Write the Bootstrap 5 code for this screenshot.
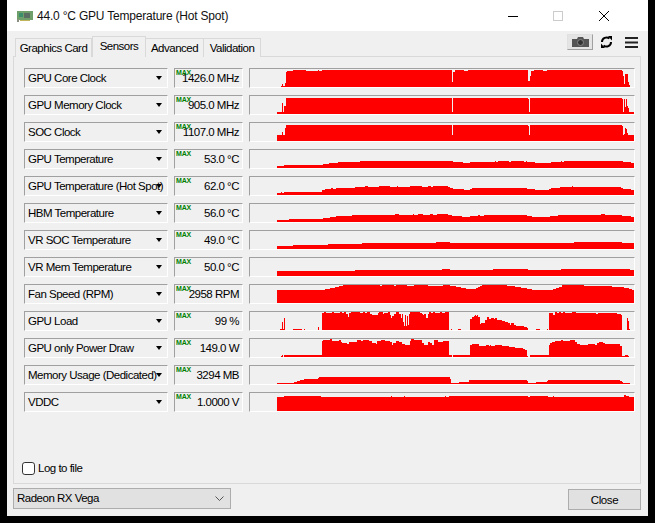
<!DOCTYPE html>
<html lang="en">
<head>
<meta charset="utf-8">
<title>GPU-Z</title>
<link href="https://cdn.jsdelivr.net/npm/bootstrap@5.3.0/dist/css/bootstrap.min.css" rel="stylesheet">
<style>
html,body{background:#000;margin:0;height:523px;overflow:hidden}
body{font-family:"Liberation Sans",Arial,sans-serif;font-size:11.5px;letter-spacing:-.5px;color:#000}
.gz-win{width:641px;height:516px;margin-left:7px;background:#f0f0f0}
.gz-title{height:31px;background:#fff;padding-left:10px;font-size:12px;letter-spacing:-.2px}
.gz-title svg{display:block}
.gz-caption{margin-left:4px;color:#111}
.gz-ctl{margin-left:auto;display:flex;align-items:center}
.gz-body{padding:5px 7px 0 6px}
.gz-tabs{height:21px;margin-bottom:-1px;position:relative;z-index:2}
.gz-tabs .nav{border:0;padding-left:2px;gap:0}
.gz-tabs .nav-link{height:19px;margin-top:2px;padding:0;text-align:center;line-height:19px;border:1px solid #d9d9d9;border-bottom:0;border-left:0;border-radius:0;color:#000;font-size:11.5px;background:#f0f0f0;white-space:nowrap}
.gz-tabs .nav-item:first-child .nav-link{border-left:1px solid #d9d9d9;width:77px}
.gz-tabs .nav-link.active{height:21px;margin-top:0;line-height:19px;border:1px solid #d9d9d9;border-bottom:0;background:#f0f0f0;width:54px;padding:0}
.gz-adv{width:58px}
.gz-val{width:57px}
.gz-tools{margin-left:auto;height:16px;gap:7px;padding-right:3px;margin-top:-2px}
.gz-ham{margin-left:5px}
.gz-cam{width:26px;height:16px;background:#e4e4e4;border:1px solid;border-color:#e0e0e0 #a0a0a0 #a0a0a0 #e0e0e0;display:flex;align-items:center;justify-content:center;padding:0}
.gz-panel{height:428px;border:1px solid #d9d9d9;padding:11px 0 8px 10px}
.gz-rows{gap:7px}
.gz-row{height:20px;gap:6px}
.gz-box{height:20px;border:1px solid;border-color:#a0a0a0 #fff #fff #a0a0a0;background:#f0f0f0}
.gz-sel{width:144px;padding-left:3px;line-height:18px;white-space:nowrap;position:relative}
.gz-caret{position:absolute;left:131px;top:7px;width:0;height:0;border-left:3.5px solid transparent;border-right:3.5px solid transparent;border-top:4px solid #000}
.gz-read{width:69px;line-height:18px;text-align:right;padding-right:3px;position:relative;white-space:nowrap}
.gz-max{position:absolute;left:1px;top:0;font-size:7px;line-height:8px;color:#008000;font-weight:700;letter-spacing:-.2px}
.gz-graph{width:386px;padding:0}
.gz-graph svg{display:block;width:384px;height:18px}
.gz-graph path{fill:#f00}
.gz-log{margin-top:auto;margin-left:-2px;gap:3px;line-height:14px}
.gz-check{width:13px;height:13px;margin:0;border:1px solid #333;border-radius:0;background:#fff}
.gz-foot{margin-top:4px}
.gz-combo{width:218px;height:21px;background:#e1e1e1;border:1px solid #adadad;padding:0 6px 0 3px;line-height:19px}
.gz-close{width:73px;height:21px;background:#e1e1e1;border:1px solid #adadad;border-radius:0;padding:0;font-size:11.5px;letter-spacing:-.4px;line-height:18px;color:#000;margin-left:auto;margin-top:1px}
</style>
</head>
<body>
<div class="gz-win d-flex flex-column">
  <div class="gz-title d-flex align-items-center">
    <svg width="16" height="12" viewBox="0 0 16 12"><rect x="0" y="1" width="16" height="9" fill="#6f9f6a"/><rect x="0" y="9" width="2" height="3" fill="#8a8f80"/><rect x="7" y="3" width="6" height="5" fill="#5a6e63"/><rect x="2" y="3" width="4" height="4" fill="#3c8f6c"/><rect x="3" y="10" width="10" height="1" fill="#c2b45a"/></svg>
    <span class="gz-caption">44.0 °C GPU Temperature (Hot Spot)</span>
    <div class="gz-ctl">
      <svg width="122" height="12" viewBox="0 0 122 12"><path d="M1 6.5H11" stroke="#000" fill="none"/><rect x="46.5" y="1.5" width="9" height="9" fill="none" stroke="#ccc"/><path d="M92 1L102 11M102 1L92 11" stroke="#000" fill="none"/></svg>
      <span style="width:19px"></span>
    </div>
  </div>
  <div class="gz-body flex-grow-1">
    <div class="gz-tabs d-flex">
      <ul class="nav nav-tabs">
        <li class="nav-item"><a class="nav-link" href="#">Graphics Card</a></li>
        <li class="nav-item"><a class="nav-link active" href="#">Sensors</a></li>
        <li class="nav-item"><a class="nav-link gz-adv" href="#">Advanced</a></li>
        <li class="nav-item"><a class="nav-link gz-val" href="#">Validation</a></li>
      </ul>
      <div class="gz-tools d-flex align-items-center align-self-start">
        <button class="gz-cam" type="button" aria-label="Screenshot"><svg width="17" height="10" viewBox="0 0 17 10"><path d="M0 2H5L6 0H11L12 2H17V10H0Z" fill="#555"/><circle cx="8.5" cy="5.5" r="3" fill="#333" stroke="#888"/></svg></button>
        <svg width="13" height="12" viewBox="0 0 13 12" aria-label="Refresh"><path d="M2 6A4.5 4.5 0 0 1 9.5 2.6M11 6A4.5 4.5 0 0 1 3.5 9.4" fill="none" stroke="#000" stroke-width="2"/><path d="M8 0H12V4.5ZM5 12H1V7.5Z" fill="#000"/></svg>
        <svg width="13" height="11" viewBox="0 0 13 11" class="gz-ham" aria-label="Menu"><path d="M0 0H13V2H0ZM0 4.5H13V6.5H0ZM0 9H13V11H0Z" fill="#222"/></svg>
      </div>
    </div>
    <div class="gz-panel d-flex flex-column">
      <div class="gz-rows d-flex flex-column">
        <div class="gz-row d-flex"><div class="gz-box gz-sel">GPU Core Clock<i class="gz-caret"></i></div><div class="gz-box gz-read"><span class="gz-max">MAX</span>1426.0 MHz</div><div class="gz-box gz-graph"><svg viewBox="250 1 384 18" shape-rendering="crispEdges"><path d="M281 19V18H282V16H283V18H285V15H286V4H287V3H293V2H306V3H318V2H319V3H322V2H452V14H453V4H455V2H464V3H468V2H528V13H530V8H531V3H534V2H543V3H547V2H622V3H623V8H624V16H625V6H628V14H629V17H630V19Z"/></svg></div></div>
        <div class="gz-row d-flex"><div class="gz-box gz-sel">GPU Memory Clock<i class="gz-caret"></i></div><div class="gz-box gz-read"><span class="gz-max">MAX</span>905.0 MHz</div><div class="gz-box gz-graph"><svg viewBox="250 1 384 18" shape-rendering="crispEdges"><path d="M277 19V17H282V8H283V17H284V11H286V3H452V17H453V3H528V4H529V17H530V3H622V4H623V17H624V4H625V12H626V4H627V11H628V13H629V17H634V19Z"/></svg></div></div>
        <div class="gz-row d-flex"><div class="gz-box gz-sel">SOC Clock<i class="gz-caret"></i></div><div class="gz-box gz-read"><span class="gz-max">MAX</span>1107.0 MHz</div><div class="gz-box gz-graph"><svg viewBox="250 1 384 18" shape-rendering="crispEdges"><path d="M277 19V13H282V10H283V13H285V6H286V3H452V13H453V3H528V4H529V13H530V3H622V4H623V13H624V12H625V6H626V7H627V11H628V13H634V19Z"/></svg></div></div>
        <div class="gz-row d-flex"><div class="gz-box gz-sel">GPU Temperature<i class="gz-caret"></i></div><div class="gz-box gz-read"><span class="gz-max">MAX</span>53.0 °C</div><div class="gz-box gz-graph"><svg viewBox="250 1 384 18" shape-rendering="crispEdges"><path d="M277 19V17H284V16H323V15H329V14H338V13H360V12H453V13H463V14H470V13H495V12H496V13H498V12H509V13H511V12H524V13H526V12H527V13H535V14H551V13H561V12H562V13H564V12H623V13H631V14H634V19Z"/></svg></div></div>
        <div class="gz-row d-flex"><div class="gz-box gz-sel">GPU Temperature (Hot Spot)<i class="gz-caret"></i></div><div class="gz-box gz-read"><span class="gz-max">MAX</span>62.0 °C</div><div class="gz-box gz-graph"><svg viewBox="250 1 384 18" shape-rendering="crispEdges"><path d="M277 19V17H281V16H282V17H284V16H322V14H325V13H331V12H333V13H336V12H355V11H365V10H368V11H379V10H390V11H397V10H398V11H410V10H422V11H428V10H431V11H433V10H448V11H450V12H453V13H464V14H470V13H472V12H527V13H535V14H549V13H551V12H560V11H572V10H573V11H621V12H623V13H631V14H634V19Z"/></svg></div></div>
        <div class="gz-row d-flex"><div class="gz-box gz-sel">HBM Temperature<i class="gz-caret"></i></div><div class="gz-box gz-read"><span class="gz-max">MAX</span>56.0 °C</div><div class="gz-box gz-graph"><svg viewBox="250 1 384 18" shape-rendering="crispEdges"><path d="M277 19V17H289V16H323V15H330V14H336V13H352V12H395V11H399V12H413V11H414V12H418V11H423V12H430V11H433V12H437V11H448V12H452V13H462V14H470V13H478V12H480V13H484V12H527V13H532V14H550V13H558V12H601V11H605V12H622V13H631V14H634V19Z"/></svg></div></div>
        <div class="gz-row d-flex"><div class="gz-box gz-sel">VR SOC Temperature<i class="gz-caret"></i></div><div class="gz-box gz-read"><span class="gz-max">MAX</span>49.0 °C</div><div class="gz-box gz-graph"><svg viewBox="250 1 384 18" shape-rendering="crispEdges"><path d="M277 19V16H293V15H328V14H362V13H436V12H450V13H574V12H622V13H634V19Z"/></svg></div></div>
        <div class="gz-row d-flex"><div class="gz-box gz-sel">VR Mem Temperature<i class="gz-caret"></i></div><div class="gz-box gz-read"><span class="gz-max">MAX</span>50.0 °C</div><div class="gz-box gz-graph"><svg viewBox="250 1 384 18" shape-rendering="crispEdges"><path d="M277 19V14H355V13H442V12H450V13H493V12H528V13H561V12H630V13H634V19Z"/></svg></div></div>
        <div class="gz-row d-flex"><div class="gz-box gz-sel">Fan Speed (RPM)<i class="gz-caret"></i></div><div class="gz-box gz-read"><span class="gz-max">MAX</span>2958 RPM</div><div class="gz-box gz-graph"><svg viewBox="250 1 384 18" shape-rendering="crispEdges"><path d="M277 19V6H325V5H330V4H335V3H339V2H343V1H380V2H382V1H394V2H396V1H407V2H414V1H428V2H443V1H450V2H456V3H461V4H466V5H476V4H478V3H480V2H482V1H507V2H515V3H521V4H527V5H532V6H553V5H556V4H559V3H562V1H584V2H612V3H624V4H629V5H632V6H634V19Z"/></svg></div></div>
        <div class="gz-row d-flex"><div class="gz-box gz-sel">GPU Load<i class="gz-caret"></i></div><div class="gz-box gz-read"><span class="gz-max">MAX</span>99 %</div><div class="gz-box gz-graph"><svg viewBox="250 1 384 18" shape-rendering="crispEdges"><path d="M280 19V18H282V11H283V18H284V7H285V19ZM293 19V18H302V19ZM304 19V18H305V19ZM318 19V16H319V19ZM322 19V2H324V1H326V2H332V1H334V2H340V1H342V2H344V1H346V3H348V6H349V2H351V1H360V2H363V1H365V2H367V1H370V3H372V4H378V2H379V1H383V3H384V2H388V1H390V4H391V7H392V5H394V3H396V1H399V3H401V7H402V3H403V11H404V15H405V4H406V15H407V5H408V14H409V3H410V1H420V2H422V3H423V4H424V3H426V7H428V3H429V1H431V2H433V1H435V2H440V1H442V2H445V1H449V19ZM451 19V18H452V19ZM458 19V18H461V19ZM470 19V8H472V6H474V5H475V4H476V5H477V4H478V6H480V13H481V12H485V9H487V6H489V8H491V7H494V8H495V7H497V9H502V10H505V11H508V12H510V14H511V12H514V14H516V15H524V16H527V17H528V19ZM536 19V18H540V19ZM547 19V18H548V19ZM549 19V2H553V4H555V1H557V2H559V1H561V2H563V1H565V2H572V1H576V2H596V3H598V2H617V3H621V4H622V19ZM627 19V7H628V10H629V18H630V19Z"/></svg></div></div>
        <div class="gz-row d-flex"><div class="gz-box gz-sel">GPU only Power Draw<i class="gz-caret"></i></div><div class="gz-box gz-read"><span class="gz-max">MAX</span>149.0 W</div><div class="gz-box gz-graph"><svg viewBox="250 1 384 18" shape-rendering="crispEdges"><path d="M281 19V18H282V17H283V19ZM284 19V17H322V3H323V2H330V1H332V3H339V2H341V4H342V5H347V6H349V4H357V2H361V3H363V2H369V3H372V5H376V6H377V3H381V2H385V3H390V4H392V7H393V5H396V3H399V4H402V6H405V7H410V3H411V1H414V2H422V5H424V7H428V4H430V5H432V7H434V2H438V4H443V3H449V17H452V19ZM453 19V17H470V7H472V6H479V8H486V7H489V8H490V7H491V8H495V7H502V8H509V9H515V10H523V11H525V12H527V18H528V19ZM530 19V17H549V7H550V5H552V4H555V3H561V2H563V3H570V2H575V4H577V6H580V7H588V6H595V7H597V5H599V4H603V5H605V6H620V8H622V18H625V17H628V18H629V19Z"/></svg></div></div>
        <div class="gz-row d-flex"><div class="gz-box gz-sel">Memory Usage (Dedicated)<i class="gz-caret"></i></div><div class="gz-box gz-read"><span class="gz-max">MAX</span>3294 MB</div><div class="gz-box gz-graph"><svg viewBox="250 1 384 18" shape-rendering="crispEdges"><path d="M277 19V18H294V17H297V16H300V15H304V14H318V13H319V12H450V14H451V18H459V17H469V15H527V16H528V18H536V17H547V16H548V15H620V16H622V17H623V18H630V19Z"/></svg></div></div>
        <div class="gz-row d-flex"><div class="gz-box gz-sel">VDDC<i class="gz-caret"></i></div><div class="gz-box gz-read"><span class="gz-max">MAX</span>1.0000 V</div><div class="gz-box gz-graph"><svg viewBox="250 1 384 18" shape-rendering="crispEdges"><path d="M277 19V5H284V4H321V5H391V4H392V5H404V4H405V5H445V4H446V5H449V4H528V5H530V4H548V5H553V4H554V5H624V3H626V4H629V5H634V19Z"/></svg></div></div>
      </div>
      <label class="gz-log d-flex align-items-center"><input class="form-check-input gz-check" type="checkbox"><span>Log to file</span></label>
    </div>
    <div class="gz-foot d-flex align-items-start">
      <div class="gz-combo d-flex align-items-center justify-content-between"><span>Radeon RX Vega</span><svg width="9" height="5" viewBox="0 0 9 5"><path d="M.5 .5L4.5 4.5L8.5 .5" fill="none" stroke="#555"/></svg></div>
      <button type="button" class="btn gz-close">Close</button>
    </div>
  </div>
</div>
<script src="https://cdn.jsdelivr.net/npm/bootstrap@5.3.0/dist/js/bootstrap.bundle.min.js"></script>
</body>
</html>
